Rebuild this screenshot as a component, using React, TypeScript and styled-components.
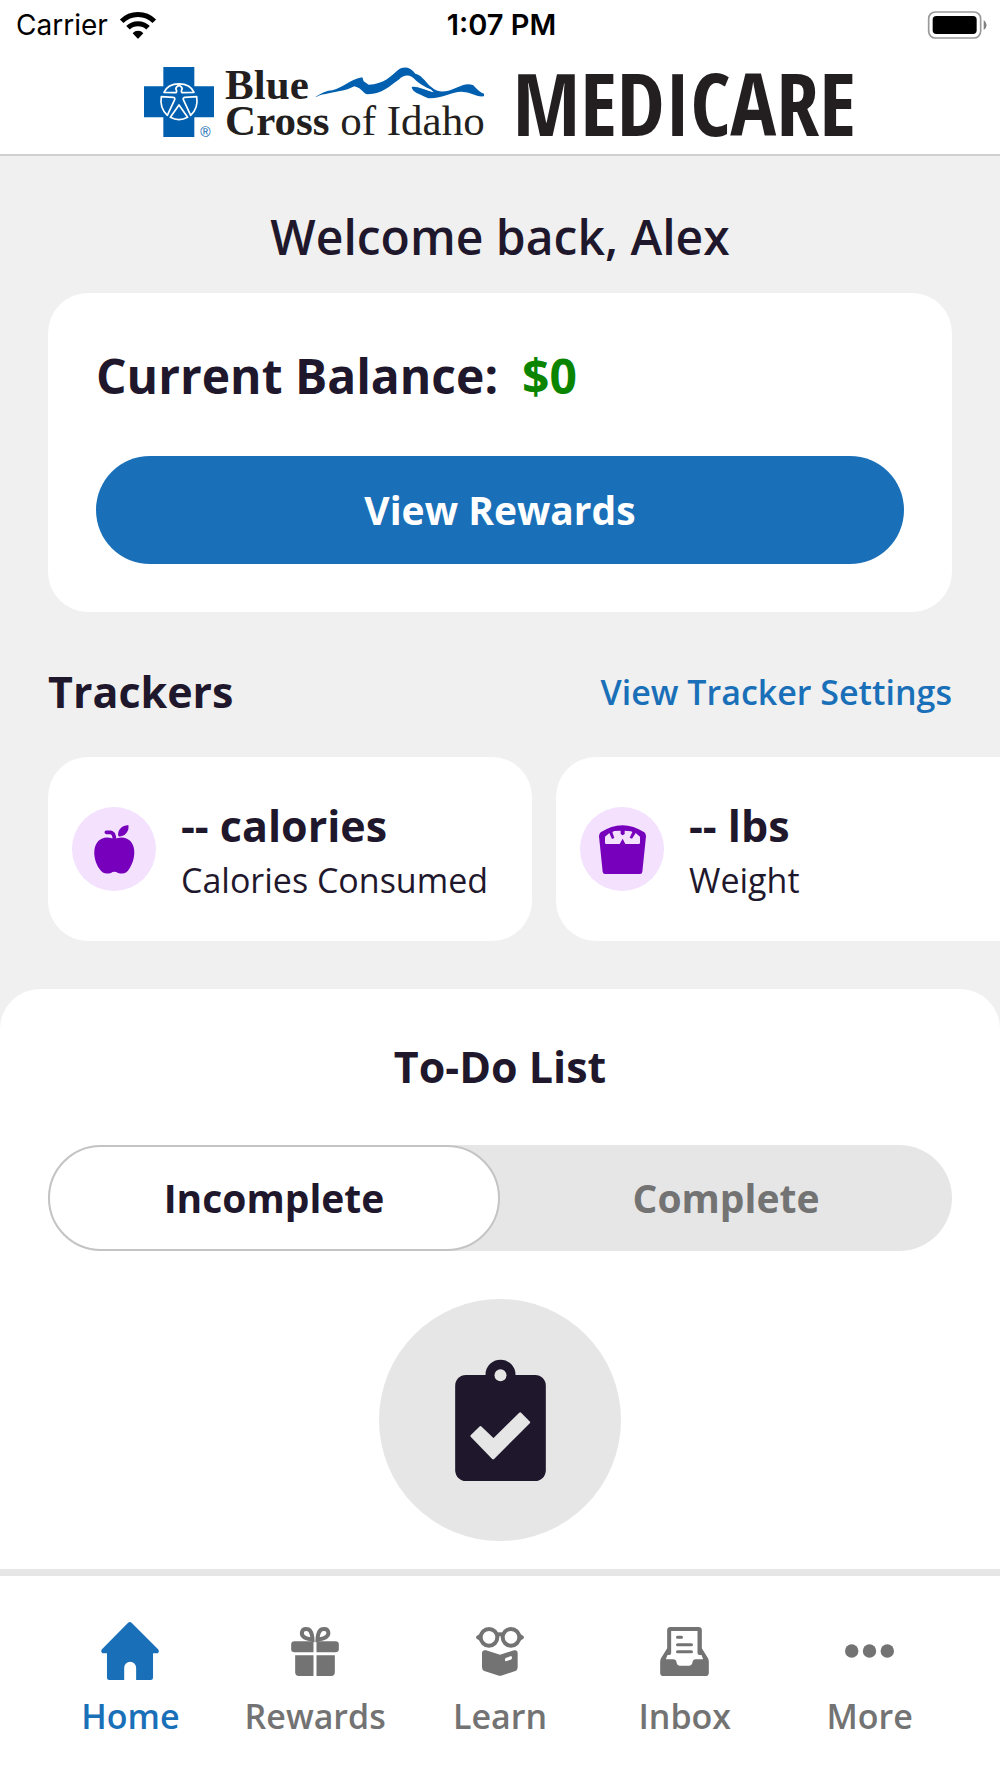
import React, { useState } from 'react';
import styled, { createGlobalStyle } from 'styled-components';

const ink = '#1f182d';
const blue = '#1a70b8';
const logoBlue = '#0060af';
const logoInk = '#231f20';
const purple = '#7600bc';
const grey = '#737373';

const GlobalStyle = createGlobalStyle`
  *, *::before, *::after { box-sizing: border-box; }
  body {
    margin: 0;
    background: #ffffff;
    color: ${ink};
    font-family: "Open Sans", "Noto Sans", sans-serif;
  }
  h1, h2, p { margin: 0; }
  button { font-family: inherit; cursor: pointer; }
  svg { display: block; flex: none; overflow: visible; }
`;

const Screen = styled.div`
  display: flex;
  flex-direction: column;
  min-height: 100vh;
  background: #f0f0f0;
`;

const StatusBar = styled.div`
  display: grid;
  grid-template-columns: 1fr auto 1fr;
  align-items: center;
  height: 50px;
  padding: 0 13px 0 16px;
  background: #ffffff;
  color: #000000;
  font-family: Inter, Roboto, sans-serif;
  font-size: 28px;
  line-height: 34px;
`;

const Carrier = styled.div`
  display: flex;
  align-items: center;
  gap: 12px;
`;

const Time = styled.div`
  font-size: 29px;
  font-weight: 600;
`;

const BatterySlot = styled.div`
  display: flex;
  justify-content: flex-end;
`;

const Header = styled.header`
  display: flex;
  justify-content: center;
  align-items: flex-start;
  height: 106px;
  padding-top: 17px;
  background: #ffffff;
  border-bottom: 2px solid #cfcfcf;
  color: ${logoInk};
`;

const Wordmark = styled.div`
  margin: 0 28px 0 11px;
  font-family: "Liberation Serif", serif;
  font-size: 43px;
  line-height: 36px;
  white-space: nowrap;
`;

const WordmarkLine = styled.div`
  display: flex;
  gap: 6px;
`;

const Product = styled.div`
  font-family: "Open Sans Condensed", "Liberation Sans Narrow", "Open Sans", sans-serif;
  font-size: 86px;
  font-weight: 700;
  line-height: 72px;
`;

const Content = styled.main`
  display: flex;
  flex: 1;
  flex-direction: column;
`;

const Welcome = styled.h1`
  padding: 48px 48px 24px;
  font-size: 48px;
  font-weight: 600;
  line-height: 65px;
  text-align: center;
`;

const BalanceCard = styled.section`
  display: flex;
  flex-direction: column;
  gap: 48px;
  margin: 0 48px;
  padding: 50px 48px 48px;
  border-radius: 40px;
  background: #ffffff;
`;

const Balance = styled.p`
  display: flex;
  gap: 24px;
  font-size: 48px;
  font-weight: 700;
  line-height: 65px;
`;

const Amount = styled.span`
  color: #0b8500;
`;

const PrimaryButton = styled.button`
  height: 108px;
  border: 0;
  border-radius: 54px;
  background: ${blue};
  color: #ffffff;
  font-size: 39px;
  font-weight: 700;
  line-height: 54px;
`;

const SectionHead = styled.div`
  display: flex;
  justify-content: space-between;
  align-items: center;
  padding: 50px 48px 35px;
`;

const SectionTitle = styled.h2`
  font-size: 43px;
  font-weight: 700;
  line-height: 60px;
`;

const TextLink = styled.a`
  color: ${blue};
  font-size: 34px;
  font-weight: 600;
  text-decoration: none;
`;

const TrackerRow = styled.div`
  display: flex;
  gap: 24px;
  padding: 0 48px 48px;
  overflow-x: auto;
  scrollbar-width: none;
`;

const TrackerCard = styled.article`
  display: flex;
  flex: none;
  align-items: center;
  gap: 25px;
  width: 484px;
  height: 184px;
  padding: 0 24px;
  border-radius: 40px;
  background: #ffffff;
`;

const TrackerIcon = styled.div`
  display: flex;
  justify-content: center;
  align-items: center;
  width: 84px;
  height: 84px;
  border-radius: 50%;
  background: #f3e1fe;
`;

const TrackerValue = styled.p`
  font-size: 43px;
  font-weight: 700;
  line-height: 62px;
  white-space: nowrap;
`;

const TrackerLabel = styled.p`
  font-size: 34px;
  line-height: 46px;
  white-space: nowrap;
`;

const TodoPanel = styled.section`
  display: flex;
  flex: 1;
  flex-direction: column;
  align-items: center;
  gap: 48px;
  padding: 48px 48px 28px;
  border-radius: 40px 40px 0 0;
  background: #ffffff;
`;

const Segments = styled.div`
  display: flex;
  align-self: stretch;
  border-radius: 53px;
  background: #e6e6e6;
`;

const Segment = styled.button<{ $active: boolean }>`
  flex: 1;
  height: 106px;
  border: 2px solid ${(p) => (p.$active ? '#c4c4c4' : 'transparent')};
  border-radius: 53px;
  background: ${(p) => (p.$active ? '#ffffff' : 'transparent')};
  color: ${(p) => (p.$active ? ink : grey)};
  font-size: 39px;
  font-weight: 700;
  line-height: 54px;
`;

const EmptyBadge = styled.div`
  display: flex;
  justify-content: center;
  align-items: center;
  width: 242px;
  height: 242px;
  border-radius: 50%;
  background: #e6e6e6;
`;

const TabBar = styled.nav`
  position: sticky;
  bottom: 0;
  display: grid;
  grid-template-columns: repeat(5, 1fr);
  padding: 40px 38px 38px;
  border-top: 7px solid #e6e6e6;
  background: #ffffff;
`;

const Tab = styled.a<{ $active?: boolean }>`
  display: flex;
  flex-direction: column;
  align-items: center;
  gap: 6px;
  color: ${(p) => (p.$active ? blue : grey)};
  font-size: 34px;
  font-weight: 600;
  line-height: 48px;
  text-decoration: none;
`;

const TabIcon = styled.span`
  display: flex;
  justify-content: center;
  align-items: center;
  height: 70px;
`;

const WifiIcon = () => (
  <svg width="36" height="27" viewBox="0 0 108 81" aria-hidden="true">
    <g fill="none" stroke="#000" strokeWidth="15">
      <path d="M5 28 C32 1 76 1 103 28" />
      <path d="M24 47 C40 31 68 31 84 47" />
    </g>
    <path d="M38 64 C46 54 62 54 70 64 L56 79 Q54 81 52 79 Z" />
  </svg>
);

const BatteryIcon = () => (
  <svg width="59" height="28" viewBox="0 0 177 84" aria-hidden="true">
    <rect x="2" y="3" width="156" height="78" rx="20" fill="none" stroke="#999" strokeWidth="5" />
    <rect x="14" y="15" width="132" height="54" rx="11" />
    <path d="M167 27 Q176 34 176 42 Q176 50 167 57 Z" fill="#808080" />
  </svg>
);

const CrossLogo = () => (
  <svg width="70" height="70" viewBox="0 0 210 210" role="img" aria-label="Blue Cross">
    <path d="M58 0H151V58H210V151H151V210H58V151H0V58H58Z" fill={logoBlue} />
    <g fill="none" stroke="#fff" strokeWidth="5" strokeLinejoin="round">
      <path d="M60 76 C75 42 135 42 150 76 L117 77 Q112 77 112 71 A9 9 0 1 0 98 71 Q98 77 93 77 Z" />
      <path d="M52 89 L88 91 Q94 92 92 98 L70 145 C56 132 48 112 52 89 Z" />
      <path d="M158 89 L122 91 Q116 92 118 98 L140 145 C154 132 162 112 158 89 Z" />
      <path d="M105 114 L131 151 Q105 165 79 151 Z" />
    </g>
    <text x="169" y="209" fill={logoBlue} fontFamily="Liberation Sans" fontSize="42">®</text>
  </svg>
);

const MountainLogo = () => (
  <svg width="169" height="32" viewBox="0 0 507 96" aria-hidden="true">
    <path
      d="M0 91 C18 78 36 71 52 70 C86 62 105 37 142 31 L146 43 L161 53 C205 52 230 26 250 8 C266 -3 287 0 301 20 C326 27 333 50 350 61 C365 75 383 75 400 71 C425 65 450 43 475 55 C485 67 496 77 507 80 V88 C482 91 470 75 444 75 C418 71 382 96 340 94 C310 79 293 77 290 60 C305 56 327 68 357 76 C337 61 315 53 302 40 C288 23 270 20 251 38 C221 59 204 79 158 82 C145 82 143 64 118 58 C93 72 57 75 32 81 C18 81 10 88 0 91 Z"
      fill={logoBlue}
    />
    <path d="M329 67 L355 75 Q348 65 337 64 Z" fill="#fff" />
  </svg>
);

const AppleIcon = () => (
  <svg width="41" height="49" viewBox="0 0 123 147" fill={purple} aria-hidden="true">
    <path d="M61 43 C72 37 86 35 99 41 C127 54 127 99 106 131 C97 145 89 148 72 144 Q61 136 51 144 C34 148 26 145 16 131 C-5 99 -5 54 23 41 C36 35 50 37 61 43 Z" />
    <path d="M37 22 H50 Q61 24 61 42" fill="none" stroke={purple} strokeWidth="11" strokeLinecap="round" />
    <path d="M73 34 C69 14 84 2 103 0 C107 20 91 36 73 34 Z" />
  </svg>
);

const ScaleIcon = () => (
  <svg width="47" height="49" viewBox="0 0 141 147" aria-hidden="true">
    <path
      d="M5 22 Q70 -21 136 22 Q141 26 141 34 L130 140 Q129 147 123 147 H18 Q12 147 11 140 L0 34 Q0 26 5 22 Z"
      fill={purple}
    />
    <path
      d="M18 35 L31 24 L39 42 L46 39 L40 21 L46 18 Q56 17 65 17 V27 L71 31 L77 27 V17 Q88 17 96 19 L100 21 L92 38 L99 41 L110 24 L123 35 V53 Q123 57 119 57 H79 L71 41 L62 57 H22 Q18 57 18 53 Z"
      fill="#f3e1fe"
    />
  </svg>
);

const ClipboardIcon = () => (
  <svg width="91" height="121" viewBox="0 0 272 363" aria-hidden="true">
    <rect y="45" width="272" height="318" rx="32" fill={ink} />
    <path d="M91 48 V44 A45 45 0 0 1 181 44 V48 Z" fill={ink} />
    <circle cx="136" cy="46" r="18" fill="#e6e6e6" />
    <path
      d="M50 228 L76 202 L115 240 L195 161 L221 187 L114 294 Z"
      fill="#e6e6e6"
      stroke="#e6e6e6"
      strokeWidth="8"
      strokeLinejoin="round"
    />
  </svg>
);

const HomeIcon = () => (
  <svg width="58" height="58" viewBox="0 0 175 175" fill="currentColor" aria-hidden="true">
    <path d="M81 3 Q87 -3 93 3 L173 83 Q177 89 172 94 H157 V168 Q157 175 150 175 H106 V138 A18 18 0 0 0 70 138 V175 H25 Q18 175 18 168 V94 H4 Q-2 89 2 83 Z" />
  </svg>
);

const GiftIcon = () => (
  <svg width="48" height="49" viewBox="0 0 143 147" fill="currentColor" aria-hidden="true">
    <path d="M10 43 H67 V76 H10 Q0 76 0 66 V53 Q0 43 10 43 Z M76 43 H133 Q143 43 143 53 V66 Q143 76 133 76 H76 Z" />
    <path d="M12 85 H67 V147 H23 Q12 147 12 136 Z M76 85 H131 V136 Q131 147 120 147 H76 Z" />
    <g fill="none" stroke="currentColor" strokeWidth="12">
      <path d="M64 38 C63 18 56 6 46 6 C32 4 28 22 37 29 C44 35 54 36 64 38 Z" />
      <path d="M79 38 C80 18 87 6 97 6 C112 4 116 22 106 29 C99 35 89 36 79 38 Z" />
    </g>
  </svg>
);

const LearnIcon = () => (
  <svg width="48" height="49" viewBox="0 0 144 147" fill="currentColor" aria-hidden="true">
    <g fill="none" stroke="currentColor" strokeWidth="12">
      <circle cx="39" cy="31" r="25" />
      <circle cx="105" cy="31" r="25" />
      <path d="M62 25 Q72 19 82 25" />
    </g>
    <path d="M14 19 L2 27 Q-2 31 2 35 L14 43 Z M130 19 L142 27 Q146 31 142 35 L130 43 Z" />
    <path
      fillRule="evenodd"
      d="M30 70 L72 83 L114 70 Q125 68 125 79 V121 Q125 129 118 132 L75 146 Q72 147 69 146 L25 132 Q18 129 18 121 V79 Q18 68 30 70 Z M91 92 Q87 93 87 97 V99 Q87 104 92 102 L104 98 Q108 97 108 93 V91 Q108 86 103 88 Z"
    />
  </svg>
);

const InboxIcon = () => (
  <svg width="49" height="49" viewBox="0 0 146 147" fill="currentColor" aria-hidden="true">
    <path
      fillRule="evenodd"
      d="M31 0 H115 Q125 0 125 10 V64 L143 93 Q146 98 146 105 V137 Q146 147 136 147 H10 Q0 147 0 137 V105 Q0 98 3 93 L21 64 V10 Q21 0 31 0 Z M33 12 V78 Q33 84 27 84 H22 L17 97 H39 Q48 97 49 106 Q51 116 58 116 H88 Q95 116 97 106 Q98 97 107 97 H129 L124 84 H118 Q112 84 112 78 V12 Z"
    />
    <path d="M52 31 H64 M52 53 H94 M52 74 H94" fill="none" stroke="currentColor" strokeWidth="9" strokeLinecap="round" />
  </svg>
);

const MoreIcon = () => (
  <svg width="49" height="14" viewBox="0 0 146 40" fill="currentColor" aria-hidden="true">
    <circle cx="20" cy="20" r="20" />
    <circle cx="73" cy="20" r="20" />
    <circle cx="126" cy="20" r="20" />
  </svg>
);

const trackers = [
  { value: '-- calories', label: 'Calories Consumed', Icon: AppleIcon },
  { value: '-- lbs', label: 'Weight', Icon: ScaleIcon },
];

const tabs = [
  { label: 'Home', Icon: HomeIcon },
  { label: 'Rewards', Icon: GiftIcon },
  { label: 'Learn', Icon: LearnIcon },
  { label: 'Inbox', Icon: InboxIcon },
  { label: 'More', Icon: MoreIcon },
];

export default function App() {
  const [filter, setFilter] = useState('Incomplete');

  return (
    <Screen>
      <GlobalStyle />
      <StatusBar>
        <Carrier>
          Carrier
          <WifiIcon />
        </Carrier>
        <Time>1:07 PM</Time>
        <BatterySlot>
          <BatteryIcon />
        </BatterySlot>
      </StatusBar>
      <Header>
        <CrossLogo />
        <Wordmark>
          <WordmarkLine>
            <b>Blue</b>
            <MountainLogo />
          </WordmarkLine>
          <div>
            <b>Cross</b> of Idaho
          </div>
        </Wordmark>
        <Product>MEDICARE</Product>
      </Header>
      <Content>
        <Welcome>Welcome back, Alex</Welcome>
        <BalanceCard>
          <Balance>
            Current Balance: <Amount>$0</Amount>
          </Balance>
          <PrimaryButton type="button">View Rewards</PrimaryButton>
        </BalanceCard>
        <SectionHead>
          <SectionTitle>Trackers</SectionTitle>
          <TextLink href="#tracker-settings">View Tracker Settings</TextLink>
        </SectionHead>
        <TrackerRow>
          {trackers.map(({ value, label, Icon }) => (
            <TrackerCard key={label}>
              <TrackerIcon>
                <Icon />
              </TrackerIcon>
              <div>
                <TrackerValue>{value}</TrackerValue>
                <TrackerLabel>{label}</TrackerLabel>
              </div>
            </TrackerCard>
          ))}
        </TrackerRow>
        <TodoPanel>
          <SectionTitle>To-Do List</SectionTitle>
          <Segments>
            {['Incomplete', 'Complete'].map((name) => (
              <Segment
                key={name}
                type="button"
                aria-pressed={filter === name}
                $active={filter === name}
                onClick={() => setFilter(name)}
              >
                {name}
              </Segment>
            ))}
          </Segments>
          <EmptyBadge>
            <ClipboardIcon />
          </EmptyBadge>
        </TodoPanel>
      </Content>
      <TabBar>
        {tabs.map(({ label, Icon }, index) => (
          <Tab key={label} href={`#${label.toLowerCase()}`} $active={index === 0}>
            <TabIcon>
              <Icon />
            </TabIcon>
            {label}
          </Tab>
        ))}
      </TabBar>
    </Screen>
  );
}
